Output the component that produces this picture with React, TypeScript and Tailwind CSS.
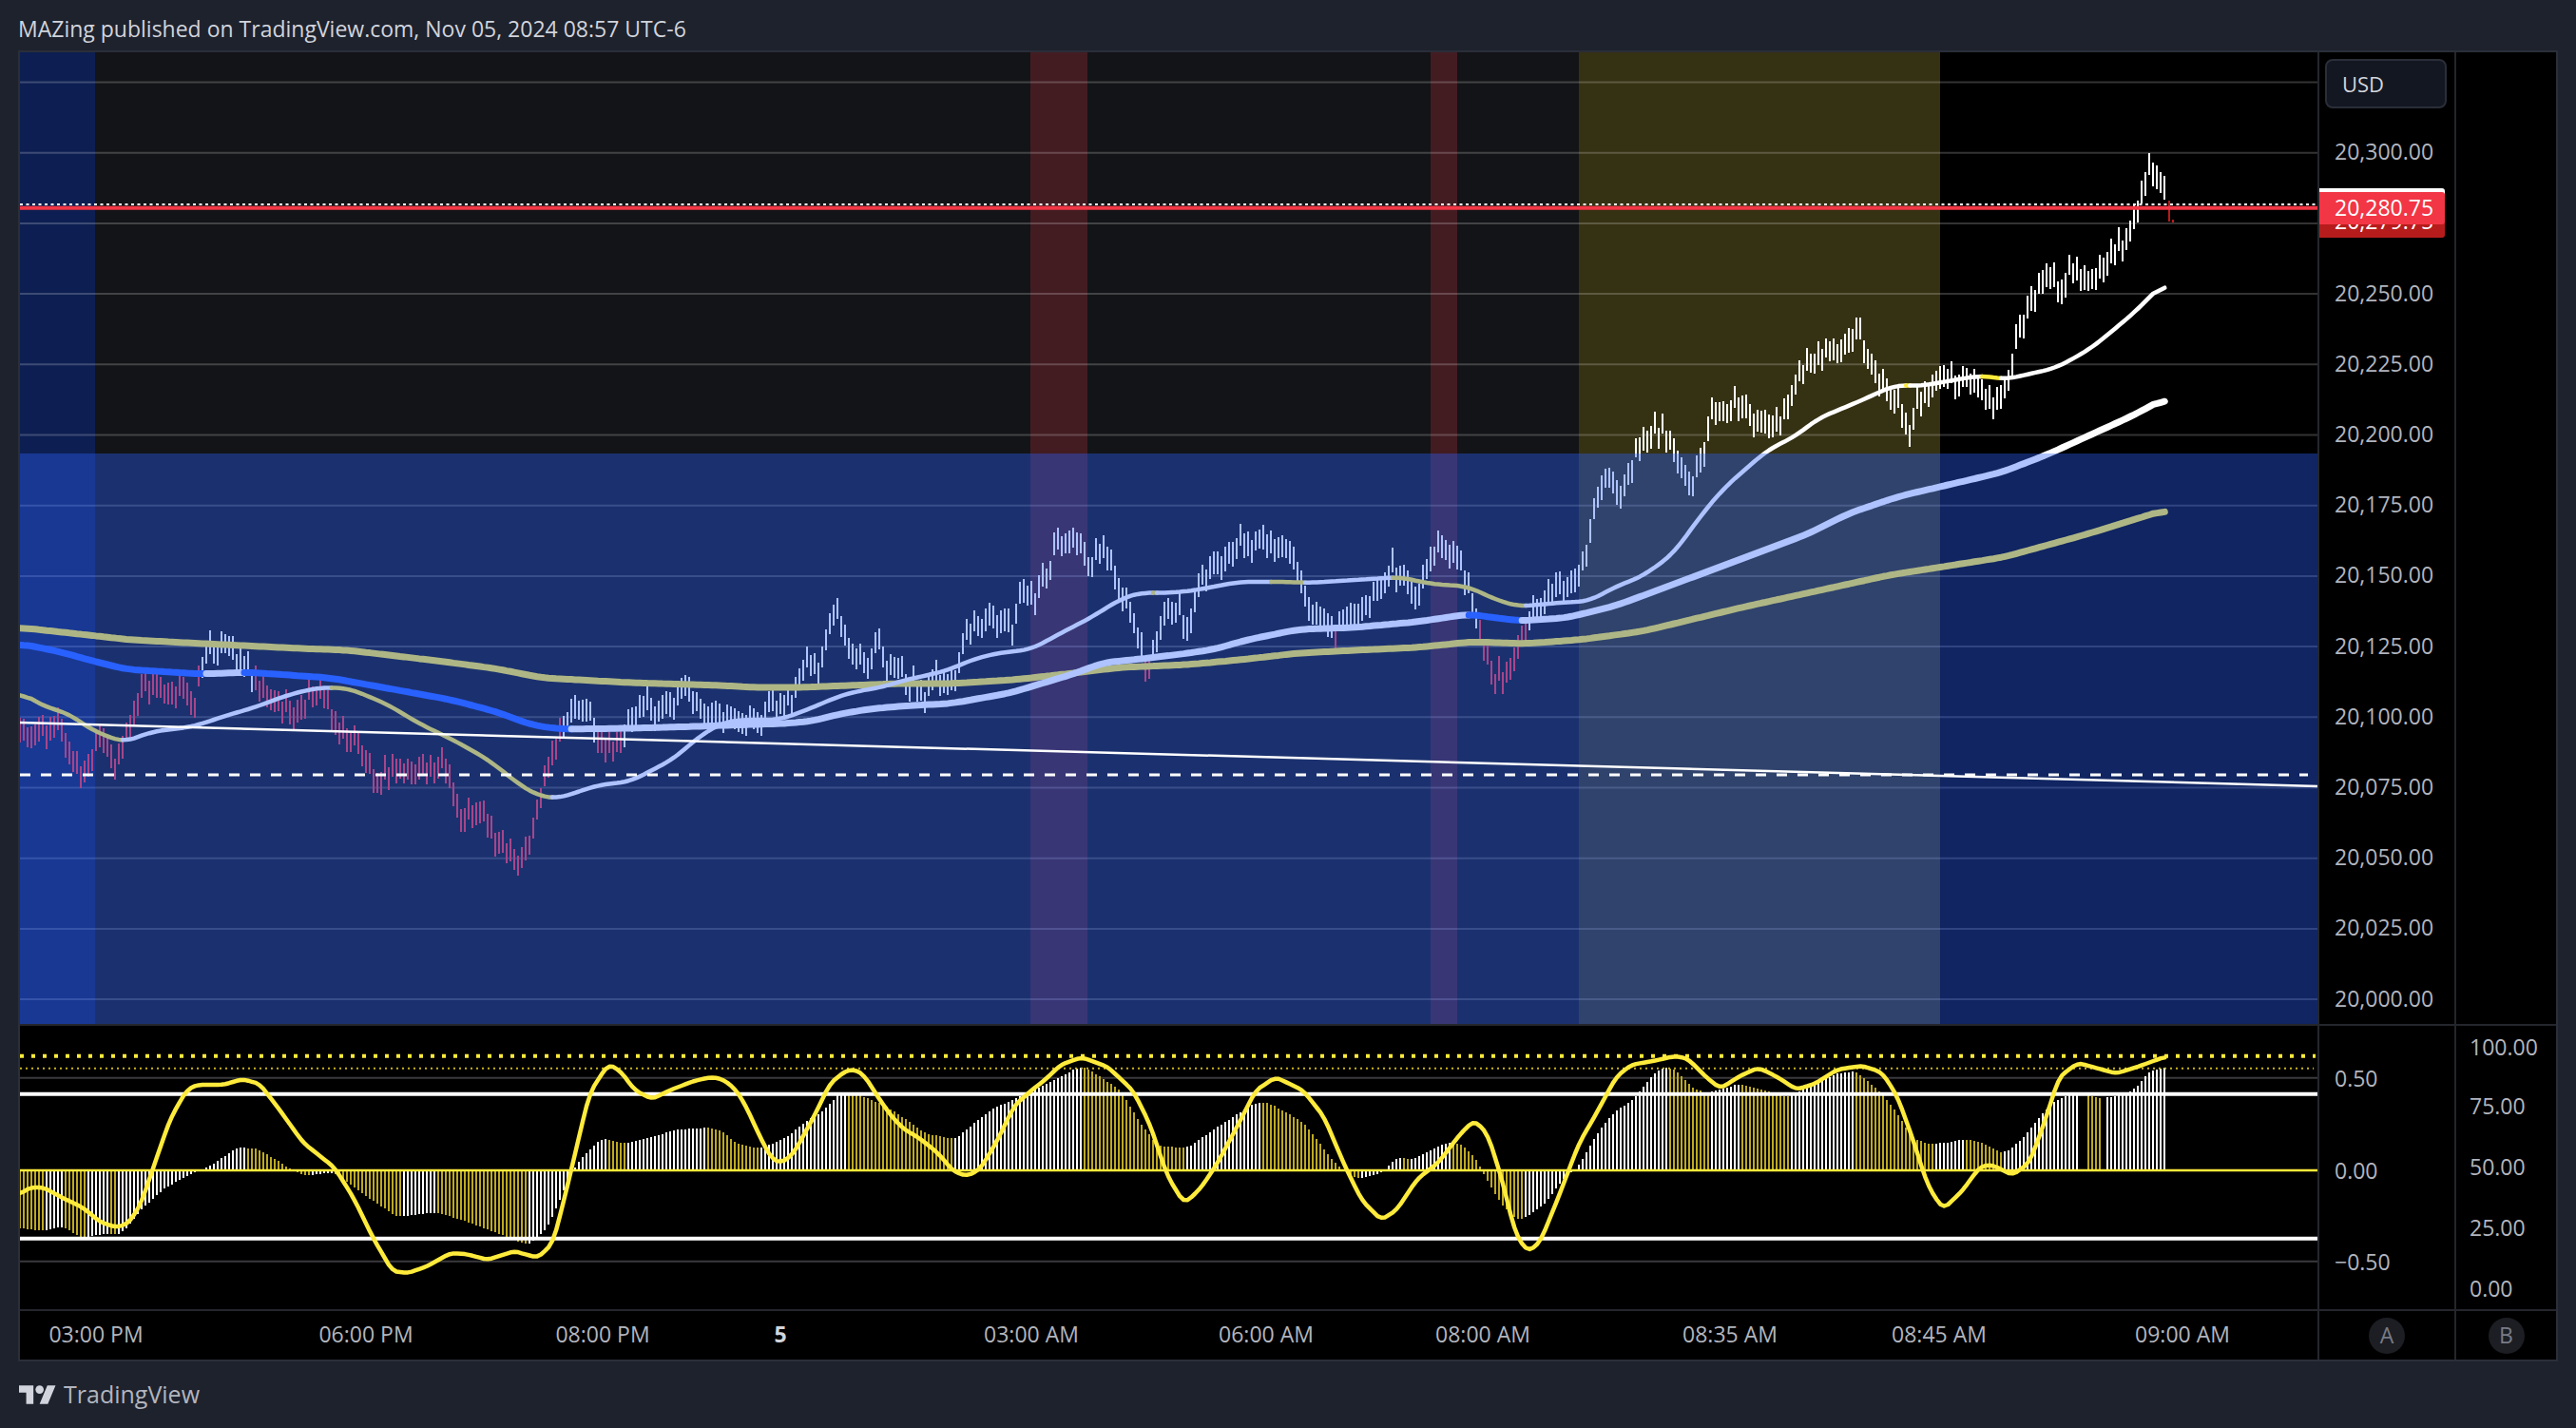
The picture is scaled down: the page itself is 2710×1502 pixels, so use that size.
import React from 'react';

type Pt = [number, number];

const FONT = 'font-["Open_Sans","Noto_Sans",sans-serif]';

const X0 = 21;
const STEP = 4.0005;
const COUNT = 565;
const barX = (i: number) => X0 + STEP * i;

const priceY = (p: number) => 160.7 + ((20300 - p) / 25) * 74.2;

const interp = (pts: Pt[], x: number) => {
  if (x <= pts[0][0]) return pts[0][1];
  for (let i = 1; i < pts.length; i++) {
    if (x <= pts[i][0]) {
      const [x0, y0] = pts[i - 1];
      const [x1, y1] = pts[i];
      return y0 + ((y1 - y0) * (x - x0)) / (x1 - x0);
    }
  }
  return pts[pts.length - 1][1];
};

const smooth = (vals: number[], r: number) =>
  vals.map((_, i) => {
    let sum = 0;
    let n = 0;
    for (let k = Math.max(0, i - r); k <= Math.min(vals.length - 1, i + r); k++) {
      sum += vals[k];
      n++;
    }
    return sum / n;
  });

const rnd = (i: number) => {
  const s = Math.sin(i * 12.9898 + 4.1) * 43758.5453;
  return s - Math.floor(s);
};

const PRICE: Pt[] = [
  [20, 770], [45, 770], [60, 757], [75, 800], [90, 817], [105, 777], [120, 803], [135, 770], [150, 723], [170, 723],
  [190, 727], [205, 737], [215, 687], [225, 680], [240, 683], [252, 692], [265, 708], [280, 727], [295, 743], [315, 753],
  [330, 723], [345, 737], [357, 770], [375, 780], [395, 817], [420, 810], [445, 813], [465, 800], [485, 860], [505, 850],
  [525, 887], [545, 913], [558, 883], [570, 833], [585, 787], [600, 747], [615, 740], [630, 777], [645, 793], [660, 760],
  [675, 737], [690, 753], [705, 743], [720, 720], [735, 747], [750, 753],
  [760, 762], [765, 752], [785, 763], [789, 753], [801, 763], [805, 749], [809, 738], [813, 737], [817, 748], [821, 740],
  [825, 742], [829, 731], [833, 743], [837, 723], [841, 714], [845, 705], [849, 691], [853, 700], [857, 698], [861, 708],
  [865, 691], [869, 673], [873, 656], [877, 647], [881, 639], [885, 659], [889, 668], [893, 682], [897, 688], [901, 693],
  [905, 688], [909, 697], [913, 703], [917, 693], [921, 676], [925, 671], [929, 691], [933, 706], [937, 699], [941, 702],
  [945, 703], [949, 700], [953, 720], [957, 727], [961, 711], [965, 727], [969, 726], [973, 740], [977, 721], [981, 715],
  [985, 705], [989, 721], [993, 718], [997, 720], [1001, 715], [1005, 717], [1009, 698], [1013, 677], [1017, 662],
  [1033, 657], [1054, 650], [1065, 660], [1076, 623], [1089, 630], [1103, 600], [1112, 570], [1134, 570], [1147, 593],
  [1161, 570], [1172, 603], [1188, 640], [1201, 677], [1207, 703], [1214, 687], [1225, 643], [1241, 643], [1250, 660],
  [1263, 613], [1281, 597], [1304, 567], [1317, 573], [1335, 570], [1357, 587], [1370, 607], [1379, 640], [1393, 643],
  [1406, 667], [1415, 647], [1433, 643], [1446, 627], [1464, 597], [1482, 613], [1491, 633], [1502, 590], [1518, 573],
  [1536, 593], [1549, 633], [1554, 650], [1571, 713], [1585, 710], [1603, 660], [1616, 640], [1647, 613], [1665, 597],
  [1677, 537], [1690, 507], [1708, 523], [1721, 473], [1739, 450], [1757, 457], [1766, 487], [1779, 510], [1791, 483],
  [1802, 433], [1824, 423], [1846, 443], [1862, 453], [1878, 433], [1891, 393], [1913, 377], [1940, 367], [1954, 347],
  [1965, 370], [1976, 403], [1998, 420], [2007, 460], [2018, 423], [2043, 403], [2065, 397], [2079, 410], [2101, 427],
  [2110, 407], [2119, 367], [2128, 337], [2141, 313], [2154, 287], [2170, 303], [2181, 280], [2195, 300], [2208, 290],
  [2221, 263], [2239, 253], [2248, 220], [2262, 177], [2270, 190], [2277, 205],
];

const MA200: Pt[] = [
  [20, 660], [66, 665], [138, 673], [214, 677], [316, 682], [367, 684], [459, 695], [520, 703], [571, 713], [663, 718],
  [760, 721], [793, 723], [843, 723], [893, 721], [943, 719], [1000, 719], [1067, 715], [1129, 708], [1179, 702], [1250, 699],
  [1304, 694], [1366, 687], [1424, 684], [1491, 681], [1549, 675], [1603, 677], [1661, 673], [1728, 664], [1832, 639],
  [1987, 605], [2108, 586], [2195, 562], [2279, 536],
];

const MA100: Pt[] = [
  [20, 677], [61, 685], [97, 695], [133, 704], [214, 709], [260, 707], [347, 713], [408, 724], [474, 736], [520, 748],
  [561, 763], [592, 767], [663, 766], [735, 764], [760, 763], [793, 762], [827, 761], [857, 758], [883, 751], [920, 745],
  [960, 742], [1000, 740], [1062, 729], [1129, 709], [1161, 697], [1201, 693], [1250, 687], [1277, 683], [1312, 673],
  [1366, 662], [1424, 660], [1491, 654], [1545, 646], [1598, 653], [1647, 650], [1700, 637], [1797, 601], [1901, 562],
  [1945, 540], [1998, 522], [2105, 497], [2154, 478], [2244, 437], [2279, 418],
];

const MA50: Pt[] = [
  [20, 727], [46, 743], [71, 750], [97, 768], [130, 781], [158, 770], [204, 764], [240, 752], [265, 745], [306, 730],
  [337, 723], [367, 724], [408, 741], [439, 760], [480, 780], [515, 800], [546, 825], [566, 837], [587, 840], [628, 826],
  [663, 822], [709, 798], [735, 775], [760, 760], [780, 757], [803, 757], [820, 757], [840, 750], [860, 742], [883, 732],
  [907, 726], [927, 723], [953, 715], [977, 710], [1000, 704], [1022, 694], [1049, 687], [1085, 683], [1112, 668],
  [1147, 650], [1179, 630], [1201, 623], [1216, 624], [1250, 622], [1304, 612], [1350, 612], [1379, 613], [1424, 610],
  [1473, 607], [1504, 614], [1545, 617], [1567, 628], [1596, 638], [1652, 633], [1670, 633], [1700, 617], [1728, 606],
  [1760, 583], [1791, 540], [1815, 512], [1860, 473], [1887, 460], [1913, 440], [1954, 423], [1994, 405], [2020, 406],
  [2083, 395], [2110, 399], [2163, 387], [2199, 367], [2244, 330], [2279, 295],
];

const STOCH: Pt[] = [
  [20, 1257], [31, 1249], [46, 1249], [66, 1260], [87, 1270], [105, 1285], [122, 1291], [135, 1287], [148, 1267], [163, 1223],
  [179, 1177], [196, 1147], [207, 1141], [235, 1141], [255, 1135], [273, 1140], [291, 1163], [319, 1202], [352, 1228],
  [372, 1260], [393, 1303], [413, 1337], [429, 1339], [449, 1332], [474, 1318], [490, 1319], [513, 1325], [541, 1316],
  [566, 1323], [582, 1307], [597, 1247], [620, 1150], [640, 1119], [653, 1127], [668, 1147], [686, 1156], [704, 1147],
  [730, 1137], [748, 1133], [760, 1135], [773, 1145], [783, 1160], [803, 1203], [813, 1220], [823, 1223], [835, 1213],
  [857, 1173], [873, 1140], [890, 1126], [900, 1125], [910, 1132], [923, 1153], [937, 1173], [950, 1187], [967, 1197],
  [987, 1213], [1003, 1232], [1017, 1237], [1031, 1230], [1049, 1200], [1067, 1163], [1085, 1147], [1098, 1137],
  [1116, 1120], [1138, 1112], [1165, 1122], [1192, 1147], [1210, 1183], [1228, 1237], [1246, 1266], [1263, 1250],
  [1281, 1223], [1304, 1180], [1321, 1147], [1342, 1133], [1371, 1147], [1393, 1175], [1415, 1227], [1433, 1263],
  [1453, 1283], [1469, 1273], [1491, 1240], [1513, 1223], [1536, 1193], [1551, 1178], [1565, 1193], [1580, 1240],
  [1594, 1297], [1607, 1317], [1620, 1307], [1638, 1263], [1661, 1203], [1680, 1170], [1700, 1133], [1716, 1120],
  [1739, 1116], [1761, 1111], [1775, 1113], [1795, 1133], [1810, 1145], [1830, 1132], [1850, 1123], [1870, 1133],
  [1890, 1146], [1909, 1140], [1933, 1125], [1959, 1121], [1980, 1128], [1996, 1153], [2012, 1197], [2028, 1247],
  [2044, 1272], [2064, 1253], [2083, 1227], [2095, 1225], [2117, 1236], [2135, 1223], [2151, 1180], [2166, 1133],
  [2186, 1118], [2226, 1129], [2249, 1122], [2279, 1111],
];

const HIST: Pt[] = [
  [20, 1292], [31, 1293], [46, 1295], [66, 1290], [87, 1303], [107, 1298], [128, 1298], [148, 1273], [173, 1250], [204, 1233],
  [219, 1228], [250, 1207], [270, 1208], [291, 1220], [306, 1230], [321, 1237], [352, 1233], [388, 1260], [418, 1280],
  [459, 1275], [485, 1283], [510, 1292], [536, 1302], [556, 1310], [577, 1290], [597, 1243], [607, 1223], [633, 1197],
  [658, 1203], [714, 1188], [745, 1186], [760, 1189], [773, 1202], [793, 1207], [803, 1207], [827, 1197], [847, 1180],
  [867, 1168], [885, 1148], [900, 1150], [917, 1157], [930, 1162], [950, 1175], [973, 1192], [993, 1196], [1005, 1198],
  [1023, 1183], [1043, 1167], [1085, 1148], [1134, 1123], [1143, 1123], [1179, 1147], [1201, 1183], [1219, 1206],
  [1250, 1207], [1286, 1182], [1321, 1160], [1335, 1160], [1371, 1180], [1402, 1220], [1415, 1232], [1429, 1240],
  [1455, 1233], [1469, 1218], [1487, 1219], [1522, 1202], [1538, 1203], [1554, 1220], [1562, 1237], [1580, 1267],
  [1598, 1285], [1625, 1267], [1647, 1237], [1661, 1227], [1680, 1193], [1696, 1172], [1720, 1155], [1739, 1130],
  [1753, 1122], [1765, 1127], [1779, 1143], [1795, 1150], [1830, 1140], [1862, 1148], [1882, 1154], [1905, 1142],
  [1933, 1129], [1953, 1127], [1977, 1147], [1996, 1170], [2012, 1197], [2028, 1203], [2048, 1202], [2067, 1198],
  [2087, 1202], [2103, 1212], [2111, 1212], [2131, 1195], [2143, 1178], [2162, 1158], [2186, 1148], [2198, 1153],
  [2210, 1155], [2222, 1154], [2245, 1147], [2261, 1127], [2277, 1123],
];

const xs = Array.from({ length: COUNT }, (_, i) => barX(i));
const ma200 = smooth(xs.map((x) => interp(MA200, x)), 3);
const ma100 = smooth(xs.map((x) => interp(MA100, x)), 3);
const ma50 = smooth(xs.map((x) => interp(MA50, x)), 3);
const stoch = smooth(xs.map((x) => interp(STOCH, x)), 1);
const hist = smooth(xs.map((x) => interp(HIST, x)), 1);

// bars: the section read bar by bar keeps its exact mids, the rest gets a small jitter
const buildBars = () => {
  let white = '';
  let red = '';
  xs.forEach((x, i) => {
    const exact = x >= 758 && x <= 1018;
    const jitter = exact ? 0 : (rnd(i) - 0.5) * 18;
    const half = exact ? 11 : 10 + rnd(i + 900) * 3;
    const mid = interp(PRICE, x) + jitter;
    const seg = `M${Math.round(x)} ${Math.round(mid - half)}V${Math.round(mid + half)}`;
    if (interp(PRICE, x) > ma100[i] + 1) red += seg;
    else white += seg;
  });
  return { white, red };
};

// a moving average changes colour by its slope
const runs = (vals: number[], up: string, down: string) => {
  const out: { d: string; color: string }[] = [];
  for (let i = 1; i < vals.length; i++) {
    const color = vals[i] > vals[i - 1] + 0.005 ? down : up;
    const last = out[out.length - 1];
    const p = `${xs[i].toFixed(1)} ${vals[i].toFixed(1)}`;
    if (last && last.color === color) last.d += `L${p}`;
    else out.push({ d: `M${xs[i - 1].toFixed(1)} ${vals[i - 1].toFixed(1)}L${p}`, color });
  }
  return out;
};

const toPath = (vals: number[]) => vals.map((v, i) => `${i ? 'L' : 'M'}${xs[i].toFixed(1)} ${v.toFixed(1)}`).join('');

const buildHist = () => {
  let white = '';
  let ochre = '';
  xs.forEach((x, i) => {
    if ((x > 2187 && x < 2197) || (x > 2210 && x < 2217)) return;
    const seg = `M${Math.round(x)} ${hist[i].toFixed(0)}V1231`;
    if (i > 0 && hist[i] < hist[i - 1]) white += seg;
    else ochre += seg;
  });
  return { white, ochre };
};

const bars = buildBars();
const histBars = buildHist();
const gridPrices = Array.from({ length: 14 }, (_, i) => 20325 - i * 25);
const axisPrices = [20300, 20250, 20225, 20200, 20175, 20150, 20125, 20100, 20075, 20050, 20025, 20000];
const fmt = (p: number) => p.toLocaleString('en-US', { minimumFractionDigits: 2 });

const axisA = [
  { y: 1134, t: '0.50' },
  { y: 1231, t: '0.00' },
  { y: 1327, t: '−0.50' },
];
const axisB = [
  { y: 1100.7, t: '100.00' },
  { y: 1163, t: '75.00' },
  { y: 1227, t: '50.00' },
  { y: 1291, t: '25.00' },
  { y: 1354.7, t: '0.00' },
];
const times = [
  { x: 101, t: '03:00 PM' },
  { x: 385, t: '06:00 PM' },
  { x: 634, t: '08:00 PM' },
  { x: 821, t: '5', bold: true },
  { x: 1085, t: '03:00 AM' },
  { x: 1332, t: '06:00 AM' },
  { x: 1560, t: '08:00 AM' },
  { x: 1820, t: '08:35 AM' },
  { x: 2040, t: '08:45 AM' },
  { x: 2296, t: '09:00 AM' },
];

function MainChart() {
  return (
    <svg className="block w-full h-full" viewBox="21 55 2417 1022">
      <rect x="21" y="55" width="79" height="1022" fill="#0d1f52" />
      <rect x="100" y="55" width="1561" height="1022" fill="#131417" />
      <rect x="1084" y="55" width="60" height="1022" fill="#431c22" />
      <rect x="1505" y="55" width="28" height="1022" fill="#431c22" />
      <rect x="1661" y="55" width="380" height="1022" fill="#353113" />
      {gridPrices.map((p) => (
        <line key={p} x1="21" x2="2438" y1={priceY(p)} y2={priceY(p)} stroke="#ffffff" strokeOpacity="0.2" strokeWidth="2" />
      ))}
      <path d={bars.red} stroke="#f23645" strokeWidth="2" fill="none" shapeRendering="crispEdges" />
      <path d={bars.white} stroke="#ffffff" strokeWidth="2" fill="none" shapeRendering="crispEdges" />
      <path d="M2282 211V233M2286 231V234" stroke="#b71c1c" strokeWidth="2" fill="none" shapeRendering="crispEdges" />
      <path d={toPath(ma200)} stroke="#ffeb3b" strokeWidth="7" fill="none" strokeLinejoin="round" strokeLinecap="round" />
      {runs(ma100, '#ffffff', '#2962ff').map((r, i) => (
        <path key={i} d={r.d} stroke={r.color} strokeWidth="7" fill="none" strokeLinejoin="round" strokeLinecap="round" />
      ))}
      {runs(ma50, '#ffffff', '#ffeb3b').map((r, i) => (
        <path key={i} d={r.d} stroke={r.color} strokeWidth="4.5" fill="none" strokeLinejoin="round" strokeLinecap="round" />
      ))}
      <rect x="21" y="477" width="2417" height="600" fill="#2962ff" fillOpacity="0.38" />
      <line x1="21" x2="2438" y1="760" y2="827" stroke="#ffffff" strokeWidth="2.5" />
      <line x1="21" x2="2428" y1="815" y2="815" stroke="#ffffff" strokeWidth="3" strokeDasharray="11 11" />
      <line x1="21" x2="2438" y1="215" y2="215" stroke="#ffffff" strokeWidth="2" strokeDasharray="3 3.5" />
      <line x1="21" x2="2438" y1="218.7" y2="218.7" stroke="#f23645" strokeWidth="4" />
    </svg>
  );
}

function SubChart() {
  return (
    <svg className="block w-full h-full" viewBox="21 1079 2417 298">
      <line x1="21" x2="2438" y1="1133.7" y2="1133.7" stroke="#3a3a3e" strokeWidth="2" />
      <line x1="21" x2="2438" y1="1326.7" y2="1326.7" stroke="#3a3a3e" strokeWidth="2" />
      <path d={histBars.ochre} stroke="#bda923" strokeWidth="2" fill="none" shapeRendering="crispEdges" />
      <path d={histBars.white} stroke="#ffffff" strokeWidth="2" fill="none" shapeRendering="crispEdges" />
      <line x1="21" x2="2436" y1="1110.7" y2="1110.7" stroke="#ffeb3b" strokeWidth="4" strokeDasharray="4 8" />
      <line x1="21" x2="2434" y1="1123.7" y2="1123.7" stroke="#c9b420" strokeWidth="2" strokeDasharray="2 4" />
      <line x1="21" x2="2438" y1="1150.7" y2="1150.7" stroke="#ffffff" strokeWidth="4" />
      <line x1="21" x2="2438" y1="1302.7" y2="1302.7" stroke="#ffffff" strokeWidth="4" />
      <line x1="21" x2="2438" y1="1231" y2="1231" stroke="#ffeb3b" strokeWidth="2.5" />
      <path d={toPath(stoch)} stroke="#ffeb3b" strokeWidth="4.5" fill="none" strokeLinejoin="round" strokeLinecap="round" />
    </svg>
  );
}

function Logo() {
  return (
    <svg width="39" height="20" viewBox="0 4 36 18" fill="#d1d4dc">
      <path d="M14 22H7V11H0V4h14v18zM28 22h-8l7.5-18h8L28 22z" />
      <circle cx="20" cy="8" r="4" />
    </svg>
  );
}

export default function App() {
  return (
    <div className={`w-[2710px] h-[1502px] bg-[#1e222d] flex flex-col ${FONT}`}>
      <div className="h-[53px] pl-[19px] pt-[15px] text-[23px] leading-[30px] text-[#d1d4dc] whitespace-nowrap">
        MAZing published on TradingView.com, Nov 05, 2024 08:57 UTC-6
      </div>

      <div className="ml-[19px] w-[2672px] border-2 border-[#2a2e39] bg-black grid grid-cols-[2417px_144px_107px] grid-rows-[1022px_300px_53px] text-[23px] text-[#b2b5be]">
        <div className="min-h-0">
          <MainChart />
        </div>
        <div className="relative border-l-2 border-[#24262c]">
          <div className="mx-[6px] mt-[7px] h-[52px] w-[128px] rounded-[8px] border-2 border-[#2a2e39] bg-[#131722] flex items-center pl-[16px] text-[#d1d4dc] text-[22px]">
            USD
          </div>
          {axisPrices.map((p) => (
            <span key={p} className="absolute left-[16px] leading-[26px] -translate-y-1/2" style={{ top: priceY(p) - 56.5 }}>
              {fmt(p)}
            </span>
          ))}
          <div className="absolute left-0 top-[159px] h-[36px] w-[132px] rounded-r-[3px] bg-[#b71c1c] text-white pl-[16px] pt-[5px] leading-[26px]">
            20,279.75
          </div>
          <div className="absolute left-0 top-[143px] h-[20px] w-[132px] rounded-tr-[3px] bg-white" />
          <div className="absolute left-0 top-[147px] h-[34px] w-[132px] rounded-r-[3px] bg-[#f23645] text-white pl-[16px] leading-[32px]">
            20,280.75
          </div>
        </div>
        <div className="border-l-2 border-[#24262c]" />

        <div className="border-t-2 border-[#24262c] min-h-0">
          <SubChart />
        </div>
        <div className="relative border-l-2 border-t-2 border-[#24262c]">
          {axisA.map((l) => (
            <span key={l.t} className="absolute left-[16px] leading-[26px] -translate-y-1/2" style={{ top: l.y - 1079 }}>
              {l.t}
            </span>
          ))}
        </div>
        <div className="relative border-l-2 border-t-2 border-[#24262c]">
          {axisB.map((l) => (
            <span key={l.t} className="absolute left-[14px] leading-[26px] -translate-y-1/2" style={{ top: l.y - 1079 }}>
              {l.t}
            </span>
          ))}
        </div>

        <div className="relative border-t-2 border-[#24262c]">
          {times.map((l) => (
            <span
              key={l.t}
              className={`absolute top-[11px] leading-[26px] -translate-x-1/2 whitespace-nowrap ${l.bold ? 'font-bold text-[#d1d4dc]' : ''}`}
              style={{ left: l.x - 21 }}
            >
              {l.t}
            </span>
          ))}
        </div>
        <div className="border-l-2 border-t-2 border-[#24262c] flex items-center justify-center">
          <span className="w-[38px] h-[38px] rounded-full bg-[#1c1e24] text-[#787b86] flex items-center justify-center">A</span>
        </div>
        <div className="border-l-2 border-t-2 border-[#24262c] flex items-center justify-center">
          <span className="w-[38px] h-[38px] rounded-full bg-[#1c1e24] text-[#787b86] flex items-center justify-center">B</span>
        </div>
      </div>

      <div className="flex-1 pl-[20px] flex items-center gap-[8px] text-[#b2b5be] text-[25px]">
        <Logo />
        <span>TradingView</span>
      </div>
    </div>
  );
}
